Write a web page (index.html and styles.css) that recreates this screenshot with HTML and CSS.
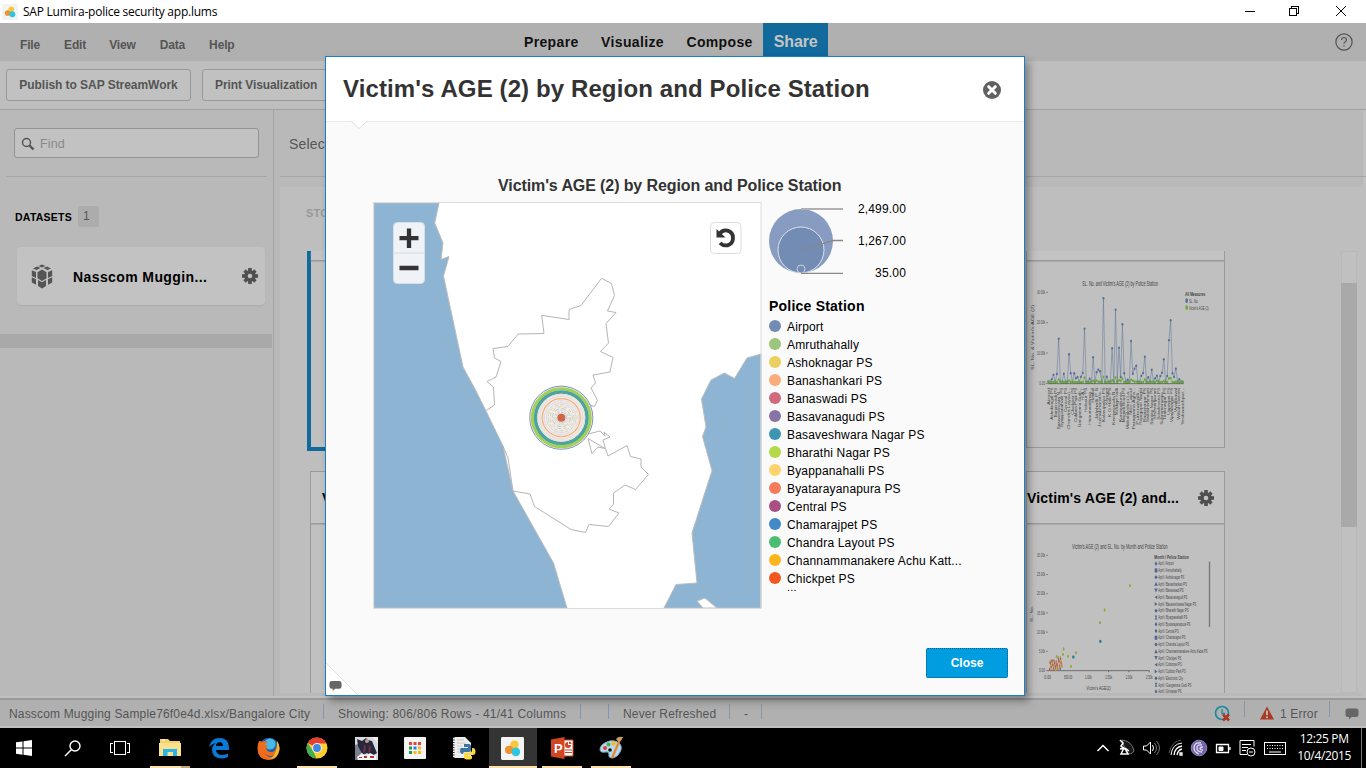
FILE: index.html
```html
<!DOCTYPE html>
<html lang="en">
<head>
<meta charset="utf-8">
<title>SAP Lumira-police security app.lums</title>
<link rel="stylesheet" href="styles.css">
</head>
<body>
<svg width="0" height="0" class="defs">
  <symbol id="gear" viewBox="0 0 16 16"><g fill="#4f4f4f"><circle cx="8" cy="8" r="5.8"/><g id="t"><rect x="6.2" y="0" width="3.6" height="16"/><rect x="0" y="6.2" width="16" height="3.6"/></g><g transform="rotate(45 8 8)"><rect x="6.3" y="0.3" width="3.4" height="15.4"/><rect x="0.3" y="6.3" width="15.4" height="3.4"/></g></g><circle cx="8" cy="8" r="2.300" fill="#c3c3c3"/></symbol>
  <symbol id="chat" viewBox="0 0 14 12"><path d="M3 .5h8q2.500 0 2.500 2.500v3.500q0 2.500-2.500 2.500H6.500L4 11.500V9H3Q.5 9 .5 6.500V3Q.5.5 3 .5z" fill="#666"/></symbol>
  <symbol id="lumira" viewBox="0 0 24 24"><rect width="24" height="24" rx="1.500" fill="#f3f3f3"/><circle cx="14" cy="8" r="4.300" fill="#f9c73a"/><circle cx="8.500" cy="13.500" r="4.300" fill="#ee9230"/><circle cx="15.500" cy="15.500" r="4.500" fill="#2fc5de"/></symbol>
</svg>
<div class="screen">
  <header class="titlebar">
    <svg class="app-icon" width="16" height="16"><use href="#lumira"/></svg>
    <span class="win-title">SAP Lumira-police security app.lums</span>
    <svg class="win-controls" width="110" height="22" fill="none" stroke="#000" shape-rendering="crispEdges"><path d="M2 10.500h10"/><path d="M46.500 7.500h7v7h-7zM48.500 7v-1.500h7v7H54"/><path d="M93 5l10 10M103 5L93 15" shape-rendering="auto"/></svg>
  </header>

  <nav class="menubar">
    <div class="menus"><span>File</span><span>Edit</span><span>View</span><span>Data</span><span>Help</span></div>
    <div class="tabs"><span>Prepare</span><span>Visualize</span><span>Compose</span><span class="active">Share</span></div>
    <svg class="help" width="18" height="18" fill="none" stroke="#555" stroke-width="1.200"><circle cx="9" cy="9" r="8.100"/><path d="M6.500 7q0-2.500 2.500-2.500T11.500 7q0 1-1.300 1.800T9 10.800M9 12.200v1.400"/></svg>
  </nav>

  <div class="toolbar"><button>Publish to SAP StreamWork</button><button class="print">Print Visualization</button></div>

  <main class="work">
    <aside class="sidebar">
      <div class="search-wrap"><div class="search">
        <svg width="14" height="14" fill="none" stroke="#555"><circle cx="5.500" cy="5.500" r="4" stroke-width="1.500"/><path d="M8.500 8.500l4 4" stroke-width="2.400"/></svg><span>Find</span>
      </div></div>
      <div class="datasets"><b>DATASETS</b><span class="count">1</span></div>
      <div class="dataset">
        <svg width="22" height="25" fill="#555"><path d="M7.500 2L11 .5 14.500 2 11 3.500zM2 4.500L6 2.500 9.500 4 5.500 6zM12.500 4L16 2.500l4 2L16.500 6zM.8 6.200L5 8v6l-4.200-2zM21.200 6.200L17 8v6l4.200-2zM.8 13.200L5 15.200v5.500L.8 18.500zM21.200 13.200L17 15.200v5.500l4.200-2.200zM11 5.500l4.500 2.800v6L11 17l-4.500-2.700v-6zM7 16l4 2.200L15 16v6l-4 2.500L7 22z"/></svg>
        <strong>Nasscom Muggin...</strong>
        <svg width="16" height="16"><use href="#gear"/></svg>
      </div>
      <div class="hscroll"></div>
    </aside>
    <section class="content">
      <div class="select-row">Select</div>
      <div class="board">
        <div class="stories">STORIES</div>
        <div class="cards">
          <article class="card selected"><div class="card-head"></div></article>
          <article class="card top right"><div class="card-head"></div>
            <svg id="line-chart" width="197" height="186" viewBox="21 63 591 558"></svg></article>
          <article class="card low"><div class="card-head"><strong>Victim's</strong></div></article>
          <article class="card low right"><div class="card-head"><strong>Victim's AGE (2) and...</strong><svg width="16" height="16"><use href="#gear"/></svg></div>
            <svg id="scatter-chart" width="197" height="169" viewBox="21 192 591 507"></svg></article>
          <div class="vscroll"><div class="thumb"></div></div>
        </div>
      </div>
    </section>
  </main>

  <footer class="status">
    <span class="s-file">Nasscom Mugging Sample76f0e4d.xlsx/Bangalore City</span>
    <span class="s-rows">Showing: 806/806 Rows - 41/41 Columns</span>
    <span class="s-gap"></span>
    <span class="s-ref">Never Refreshed</span>
    <span class="s-dash">-</span>
    <span class="s-clock"><svg width="18" height="18" fill="none"><circle cx="8" cy="8" r="6.500" stroke="#168d9e" stroke-width="1.700"/><path d="M8 4v4.500h3" stroke="#168d9e" stroke-width="1.300"/><path d="M9 9.500l6 6M15 9.500l-6 6" stroke="#a93824" stroke-width="2.600"/></svg></span>
    <span class="s-err"><svg width="14" height="14"><path d="M7 .5L14 13.500H0z" fill="#a93824"/><path d="M7 4.500v4.800M7 10.500v1.800" stroke="#ccc" stroke-width="1.600"/></svg>1 Error</span>
    <span class="s-chat"><svg width="14" height="12"><use href="#chat"/></svg></span>
  </footer>

  <div class="taskbar">
    <div class="slot n"><svg width="16" height="16" fill="#fff"><path d="M0 2.300L6.500 1.400v6.200H0zM7.500 1.200L16 0v7.600H7.500zM0 8.500h6.500v6.200L0 13.800zM7.500 8.500H16V16l-8.500-1.200z"/></svg></div>
    <div class="slot n"><svg width="17" height="17" fill="none" stroke="#fff"><circle cx="11" cy="6" r="5" stroke-width="1.400"/><path d="M7.500 9.500L1 16" stroke-width="1.500"/></svg></div>
    <div class="slot n"><svg width="20" height="15" fill="none" stroke="#fff" shape-rendering="crispEdges"><rect x="4.500" y=".5" width="11" height="13"/><path d="M3 2.500H.5v9H3M17 2.500h2.500v9H17"/></svg></div>
    <div class="slot open wide"><svg width="22" height="20"><path d="M1 1h8l2 2h10v15H1z" fill="#f5d06b"/><path d="M0 5h22v13H0z" fill="#fce18c"/><path d="M4 18v-7h14v7h-4v-4H8.500v4z" fill="#28b4e8"/><path d="M3 2h3" stroke="#fff"/></svg></div>
    <div class="slot"><svg width="22" height="22"><path d="M1 10Q3 1 11.500 1q9 0 9.500 9v3H8q.5 5 6 5 3 0 6-1.500V20q-3 1.500-7 1.500-9-.5-9-9 0-4 4-6.500Q4 6.500 1 10zM8 9h7q0-3.700-3.400-3.700T8 9z" fill="#0a78d7"/></svg></div>
    <div class="slot"><svg width="23" height="23"><circle cx="12" cy="11" r="10.300" fill="#1d5fa8"/><circle cx="13" cy="7" r="5.500" fill="#48b9e8"/><path d="M2 4q2 0 3 1 3-2 6 0-3 1-3 3l3 1-2 2q1 4 5 4 5 0 5-5 2 5-2 8-5 3-10-2 4 5 9 4 5-2 5-8 1 11-10 11Q.5 22 .5 12 .5 7 2 4z" fill="#ee6c1c"/><path d="M20 4q3 4 2.500 9Q21 22 12 22q8-3 8-18z" fill="#f8b72c"/></svg></div>
    <div class="slot open"><svg width="22" height="22"><circle cx="11" cy="11" r="10.500" fill="#fdd02f"/><path d="M11 11L1.800 6A10.500 10.500 0 0 1 20.500 6.500H11z" fill="#e53f31"/><path d="M1.800 6l5.300 8 3.500 7.500A10.500 10.500 0 0 1 1.800 6z" fill="#43ae50"/><circle cx="11" cy="11" r="5" fill="#eee"/><circle cx="11" cy="11" r="3.900" fill="#4387de"/></svg></div>
    <div class="slot"><svg width="23" height="23"><rect width="23" height="23" fill="#d8dce2"/><path d="M0 8l6-2 3 6-2 11H0z" fill="#797f8c"/><path d="M2 2l5 2 4-3 2 2 4 1 2 5 3 7-5 3-5-3-4 2-3-5-2-4z" fill="#25283c"/><path d="M9 8l2 1-1 8-2-2zM14 8l2 2-1 5-2 1z" fill="#6d2e48"/><circle cx="12" cy="4" r="2" fill="#c69b82"/><path d="M17 0h6v6z" fill="#eee"/><path d="M2 20l5-4 4 3 4-3 6 3v4H3z" fill="#f6f6f6"/><path d="M4 20h3v1H4zM9 19h3v2H9zM15 19h4v2h-4z" fill="#b33"/></svg></div>
    <div class="slot"><svg width="22" height="22"><rect width="22" height="22" rx="1" fill="#f4f4f4"/><path d="M5 5h3v3H5zM9.500 5h3v3h-3zM14 5h3v3h-3z" fill="#ea4335"/><path d="M5 9.500h3v3H5zM5 14h3v3H5z" fill="#169c53"/><path d="M9.500 9.500h3v3h-3z" fill="#1687e8"/><path d="M14 9.500h3v3h-3zM9.500 14h3v3h-3zM14 14h3v3h-3z" fill="#fcb714"/></svg></div>
    <div class="slot"><svg width="24" height="24"><path d="M1 1h12l6 6v15H1z" fill="#eee"/><path d="M1.500 1v21" stroke="#222" stroke-width="2" stroke-dasharray="1 1.500"/><path d="M5 4h7M5 7h9M5 10h5M5 13h4M5 16h4" stroke="#c8c8c8"/><path d="M12 8h5q2 0 2 2v4q0 2-2 2h-4q-2 0-2 2-3 0-3-3.500T11 12h5v-1h-4z" fill="#3c74a5"/><path d="M20 12h1q2.500 0 2.500 3.500T20.500 19H16v1h4v2q0 1.500-4 1.500t-4-2V18q0-1.500 2-1.500h4q2 0 2-2.500z" fill="#fdd843"/></svg></div>
    <div class="slot open current"><svg width="23" height="23"><use href="#lumira"/></svg></div>
    <div class="slot open"><svg width="23" height="22"><path d="M12 3h10v16H12z" fill="#fff" stroke="#d14424"/><path d="M14 13h7M14 15.500h7" stroke="#d14424"/><path d="M17 5a3 3 0 1 0 3 3h-3z" fill="#d14424"/><path d="M18 4.500q2.500 0 2.500 2.500H18z" fill="#d14424"/><path d="M0 2.500L13.500 0v22L0 19.500z" fill="#d14424"/><text x="3" y="15.500" class="ppt">P</text></svg></div>
    <div class="slot open"><svg width="25" height="24"><path d="M8 6q6-3 12 1 4 4 1 9-3 6-9 6-3-1-2-4 0-3-4-2-5 1-5-3Q2 8 8 6z" fill="#b6d9ee" stroke="#7eacc9"/><circle cx="6" cy="12" r="2" fill="#e23f3b"/><circle cx="9.500" cy="8.500" r="2" fill="#41b34c"/><circle cx="14.500" cy="7.500" r="2.200" fill="#f8b928"/><circle cx="11" cy="14" r="1.800" fill="#111"/><path d="M20 6l-7 16" stroke="#e8862c" stroke-width="2.200"/><path d="M17 3q2-3 7-2-1 3-4 6z" fill="#c99b62"/></svg></div>
    <div class="tray">
      <svg width="194" height="24" fill="none" stroke="#fff">
        <path d="M1.500 15L7 9.500l5.500 5.500" stroke-width="1.500"/>
        <g><path d="M26 4q10 1 12 11-3 5-8 1z" fill="#171717" stroke="#777"/><path d="M24 4l3 3-2 3 4 3M28 12l-3 6h7l-3-6 4 3M24 13l4-1" stroke-width="1.500"/></g>
        <path d="M47.500 10h3l4-4v12l-4-4h-3z"/><path d="M56.500 9q2 3 0 6"/><path d="M58.500 7q4 5 0 10M60.500 5q6 7 0 14" stroke="#777"/>
        <path d="M78 19q1-8 8-9M81 19q1-5 5-6M84 19v-2h2v2z" stroke-width="1.300"/><path d="M75 19q1-11 11-12" /><path d="M73 17q3-12 12-13" stroke="#555"/>
        <circle cx="103" cy="12" r="7.800" fill="#7564a8" stroke="#8d7fbc"/><path d="M105 7q-7-1-7 5 0 4 5 6M106 9q-5-1-5 3 0 4 5 4M107 11q-3 0-3 1.500t3 1.500" stroke="#e4dff2" stroke-width="1.300"/>
        <path d="M120.500 8.500h12v8h-12zM134 11v3" stroke-width="1.300"/><path d="M123 11h4v3.500h-4z" fill="#fff"/>
        <path d="M151 18.500h-7v-14h14v6M146 8.500h9M146 11.500h6M146 14.500h4"/><circle cx="155" cy="16" r="4"/><path d="M153 16h4"/>
        <rect x="168.500" y="6.500" width="21" height="12"/><path d="M171 9.500h17M171 12.500h17" stroke-dasharray="1 1.500"/><path d="M173 16h12"/>
      </svg>
      <div class="time"><span>12:25 PM</span><span>10/4/2015</span></div>
    </div>
  </div>

  <section class="modal">
    <header class="modal-head"><h1>Victim's AGE (2) by Region and Police Station</h1>
      <svg width="18" height="18"><circle cx="9" cy="9" r="9" fill="#606060"/><path d="M5.700 5.700l6.600 6.600M12.300 5.700l-6.600 6.600" stroke="#fff" stroke-width="3" stroke-linecap="round"/></svg></header>
    <svg class="notch" width="18" height="9"><path d="M1 0l8 7.500L17 0" fill="#fff" stroke="#ddd"/></svg>
    <h2>Victim's AGE (2) by Region and Police Station</h2>
    <div class="viz">
      <svg class="map" width="389" height="407" viewBox="373 202 389 407">
        <rect x="373.500" y="202.500" width="387.500" height="406" fill="#fff"/>
        <g fill="#8db4d3" stroke="#bcbcbc">
          <path d="M374 203H439L434.700 223 443 243 441 259.500 449 256.500 443.500 276 463 367 475 389 486 411 503 446 513 491 553.500 563 567 608H374z"/>
          <path d="M761 354L747 358 734.500 378.500 724.500 373 711 380 701.500 399 706 427 702.500 436.500 712 470.500 692 533 697 583 676 584.500 664 608H761z"/>
          <path d="M697 601L705 598 717 608H703z" fill="#fff"/>
        </g>
        <g fill="none" stroke="#b5b5b5">
          <path d="M503 446L508 458 513 491"/>
          <path d="M486.500 410.500L494.500 405 493.500 387 487 381.500 496 377 501 361.500 494.500 358 493 348.500 508 346.500 518 334 544 333.500 541.700 315.300 569 319.500V309.500L581 305.500 601.500 278.300 611.500 283.500 614.500 295.500 607.500 311 616 312.500 606 323.500 608.500 343 600.500 351.500 613 357.500 610 372 593 375 595.500 383 591 388 597.500 400.500 594.500 406.500 590 405"/>
          <path d="M588 434L600 431 605 436 604 432 610 437 603 440 605.500 449 608 456 627 445.500 630.500 456.500 641 459V467L648.500 474.500 635.500 489.500 625 485 613.500 493V504L609 509 619 513 608.500 526.500 589 524.500 585.500 532.500 571 529.500 534.500 506.500 530 494 513 491"/>
          <path d="M588 438.500L605 448.500 598 447 592 453.500z"/>
        </g>
        <g fill="none" transform="translate(561.300 417.700)">
          <circle r="31.600" fill="#f4f4f8" stroke="#8091ba"/><circle r="29" stroke="#a2cf55" stroke-width="3"/><circle r="25.800" stroke="#4ea39a" stroke-width="3.500"/>
          <circle r="23.500" fill="#f3ece9" stroke="#d8e0df"/><circle r="21.500" stroke="#ead7d7"/><circle r="19" stroke="#f1b070" stroke-width="1.200"/>
          <circle r="17" stroke="#e9d9de"/><circle r="15" stroke="#dcdae2"/><circle r="13" stroke="#c8dfbc" stroke-dasharray="4 2"/><circle r="11" stroke="#e9c5b0" stroke-dasharray="3 3"/><circle r="9" stroke="#b5d3b5" stroke-dasharray="5 2"/><circle r="7" stroke="#e3c9ab" stroke-dasharray="2 2"/><circle r="5.300" stroke="#b2c2cf" stroke-dasharray="2 1"/>
          <path d="M0-23V23M-23 0H23M-16-16L16 16M-16 16L16-16M-9-21L9 21M9-21L-9 21M-21-9L21 9M-21 9L21-9" stroke="#dcdcdc" stroke-width=".6"/><circle r="4" fill="#cf6747"/>
        </g>
        <rect x="373.500" y="202.500" width="387.500" height="406" fill="none" stroke="#dcdcdc"/>
        <rect x="393.500" y="222.500" width="31" height="61" rx="4" fill="#eff3f8" stroke="#d8dfe6"/><path d="M394 253h30" stroke="#d8d8d8"/>
        <path d="M399.500 238.200h19M409 228.500v19.500M399.500 268h19" stroke="#333" stroke-width="4.300"/>
        <rect x="710.500" y="222.500" width="30.500" height="31" rx="4" fill="#fff" stroke="#ddd"/>
        <path d="M719.500 234q3-4.500 8-3.300 5.500 1.500 5.500 7.300t-5.500 7.300q-4.500.8-7.500-2.300" fill="none" stroke="#333" stroke-width="3.800"/><path d="M716.500 229v8.500h9z" fill="#333"/>
      </svg>
      <div class="legend">
        <div class="sizes">
          <svg width="76" height="68"><circle cx="32" cy="34" r="32" fill="#879cc0"/><circle cx="32" cy="43" r="23" fill="#738cb4" stroke="#dce2ec"/><circle cx="32" cy="62" r="4" fill="#738cb4" stroke="#c5cddd"/><g fill="none" stroke="#888"><path d="M32 2h42" stroke="#b0b0b0" stroke-width="2"/><path d="M32 43.500l32-10h10" stroke-width="1.300"/><path d="M32 66.300h42" stroke-width="1.300"/></g></svg>
          <div class="size-labels"><span>2,499.00</span><span>1,267.00</span><span>35.00</span></div>
        </div>
        <h3>Police Station</h3>
        <ul id="stations"></ul>
        <div class="more">...</div>
      </div>
    </div>
    <button class="close">Close</button>
    <svg class="fold" width="34" height="34"><path d="M0 2v32h31z" fill="#fff"/><path d="M0 2l32 32" stroke="#ddd"/><use href="#chat" x="3" y="19" width="13" height="12"/></svg>
  </section>
</div>
<script src="app.js"></script>
</body>
</html>
```
FILE: styles.css
```css
* { box-sizing: border-box; }
body { margin: 0; font: 12px "Liberation Sans", Arial, sans-serif; letter-spacing: .17px; color: #000; }
.defs { position: absolute; }
svg { display: block; flex: none; }
.screen { position: relative; width: 1366px; height: 768px; overflow: hidden; display: flex; flex-direction: column; background: #bebebe; }
.titlebar { height: 23px; flex: none; background: #fff; display: flex; align-items: center; padding: 0 13px 0 2px; }
.win-title { font: 12px "Open Sans", sans-serif; letter-spacing: -.24px; margin-left: 5px; flex: 1; }
.menubar { height: 38px; flex: none; background: #b0b0b0; display: flex; align-items: flex-start; }
.menus { display: flex; gap: 24px; padding: 15px 0 0 20px; width: 507px; font-weight: bold; color: #555; letter-spacing: -.15px; line-height: 14px; }
.menus span:nth-child(3) { margin-left: -1px; }
.tabs { display: flex; font: bold 14px/38px "Liberation Sans", sans-serif; letter-spacing: .35px; color: #111; flex: 1; }
.tabs span { padding: 0 5.500px 0 17px; }
.tabs .active { background: #11699c; color: #c4c4c4; font-size: 16px; letter-spacing: -.1px; padding: 0; width: 65px; text-align: center; margin-left: 5px; }
.help { margin: 10px 13px 0 0; }
.toolbar { height: 49px; flex: none; border-bottom: 1px solid #a1a1a1; padding: 8px 6px; display: flex; gap: 11px; }
.toolbar button { width: 185px; height: 32px; border: 1px solid #999; border-radius: 3px; background: #c1c1c1; color: #555; font: bold 12px "Liberation Sans", sans-serif; letter-spacing: -.05px; padding: 0; }
.toolbar .print { width: 130px; text-align: left; padding-left: 12px; letter-spacing: -.08px; }
.work { height: 588px; flex: none; display: flex; background: #b9b9b9; padding-right: 6px; border-right: 3px solid #c0c0c0; border-bottom: 2px solid #c0c0c0; }
.sidebar { width: 274px; border-right: 1px solid #a3a3a3; flex: none; }
.search-wrap { margin: 0 6px; height: 67px; border-bottom: 1px solid #a5a5a5; padding: 18px 8px 0; }
.search { height: 30px; border: 1px solid #96938e; border-radius: 3px; background: #c2c2c2; display: flex; align-items: center; gap: 5px; padding: 1px 0 0 6px; color: #888; }
.search span { font-size: 12.500px; }
.datasets { display: flex; align-items: center; margin: 29px 0 0 15px; gap: 6px; }
.datasets b { font-size: 10.500px; letter-spacing: .25px; }
.count { width: 21px; height: 21px; border-radius: 2px; background: #acacac; color: #555; line-height: 21px; padding-left: 5px; }
.dataset { margin: 20px 8px 0 17px; height: 58px; border-radius: 4px; background: #c2c2c2; box-shadow: 0 1px 1px #adadad; display: flex; align-items: center; padding: 0 7px 0 14px; }
.dataset strong { font-size: 14px; letter-spacing: .4px; flex: 1; padding-left: 20px; padding-top: 2px; }
.hscroll { height: 14px; margin: 29px 1px 0 0; background: #a9a9a9; }
.content { flex: 1; padding-left: 6px; }
.select-row { height: 67px; border-bottom: 1px solid #a5a5a5; font-size: 14px; color: #555; padding: 26px 0 0 9px; }
.board { margin-top: 10px; height: 506px; background: #bebebe; overflow: hidden; }
.stories { height: 64px; padding: 20px 0 0 26px; font-weight: bold; font-size: 11px; color: #999; }
.cards { display: grid; grid-template-columns: 719px 226px 131px; grid-template-rows: 200px 242px; row-gap: 20px; padding-left: 27px; }
.card { background: #c0c0c0; border: 1px solid #999; }
.card-head { height: 10px; border-bottom: 1px solid #999; background: #c3c3c3; box-shadow: 0 1px 1px #adadad; }
.selected { grid-row: 1; grid-column: 1; width: 240px; border: solid #11699c; border-width: 0 4px 4px; }
.top { border-top: 0; height: 197px; }
.right { grid-column: 2; width: 199px; }
.card:not(.right) { grid-column: 1; }
.low { grid-row: 2; }
.low:not(.right) { width: 236px; margin-left: 3px; }
.low .card-head { height: 52px; display: flex; align-items: center; justify-content: space-between; padding: 0 10px 0 11px; }
.low.right .card-head { padding-left: 0; }
.low strong { font-size: 14px; letter-spacing: .18px; white-space: nowrap; padding-top: 1px; }
.vscroll { grid-column: 3; grid-row: 1 / 3; margin-left: 89px; width: 16px; height: 442px; background: #c0c0c0; border: 1px solid #b8b8b8; }
.thumb { margin: 31px -1px 0; height: 244px; background: #a9a9a9; }
.status { height: 30px; flex: none; background: #b0b0b0; border-top: 2px solid #999; border-bottom: 2px solid #c0c0c0; display: flex; align-items: flex-start; padding-top: 3px; color: #555; white-space: nowrap; }
.status span { height: 15px; line-height: 21px; border-right: 1px solid #8297b0; }
.s-file { width: 324px; padding-left: 9px; }
.s-rows { width: 257px; padding-left: 14px; letter-spacing: .2px; }
.s-gap { width: 28px; }
.s-ref { width: 121px; padding-left: 14px; }
.s-dash { width: 32px; padding-left: 14px; }
.status .s-clock { width: 483px; padding-left: 452px; }
.status .s-err { width: 85px; padding-left: 15px; display: flex; gap: 6px; }
.status .s-chat { border: 0; padding: 4px 0 0 15px; }
.status > span { margin-top: 1px; }
.status .s-clock, .status .s-err { margin-top: -2px; line-height: 26px; height: 16px; }
.status .s-clock svg { margin-top: 4px; }
.status .s-err svg { margin-top: 5px; }
.taskbar { height: 40px; flex: none; background: #000; display: flex; padding-right: 4px; }
.slot { width: 49px; height: 40px; display: flex; align-items: center; justify-content: center; position: relative; }
.slot.n { width: 48px; }
.slot.n:nth-child(3) { margin-right: 1.500px; }
.open::after { content: ""; position: absolute; left: 4px; bottom: 0; width: 40px; height: 2px; background: #fae0a8; }
.wide::after { background: linear-gradient(90deg, #fae0a8 78%, #bea87b 78%); }
.current { background: #343434; width: 48px; margin-right: 1px; }
.current::after { left: 0; width: 48px; }
.tray { margin-left: auto; display: flex; align-items: center; border-right: 1px solid #777; padding-right: 10px; width: 266px; justify-content: space-between; }
.time { color: #fff; font: 12px/17px "Open Sans", sans-serif; letter-spacing: -.35px; display: flex; flex-direction: column; align-items: center; margin-top: -2px; }
.ppt { font: bold 13px "Liberation Sans", sans-serif; fill: #fff; }
.modal { position: absolute; left: 325px; top: 56px; width: 700px; height: 640px; border: 1px solid #1480cc; background: #fafafa; box-shadow: 4px 5px 8px rgba(0,0,0,.35); }
.modal-head { height: 65px; background: #fff; border-bottom: 1px solid #ebebeb; display: flex; align-items: center; justify-content: space-between; padding: 1px 23px 0 17px; }
h1 { margin: 0; font-size: 24px; letter-spacing: .11px; color: #333; padding-bottom: 2px; }
.notch { margin: -1px 0 0 24px; }
h2 { margin: 46px 0 0 172px; font-size: 16px; line-height: 20px; letter-spacing: -.1px; color: #333; }
.viz { display: flex; margin: 6px 0 0 47px; gap: 7px; }
.legend { padding-top: 5px; }
.sizes { display: flex; }
.size-labels { display: flex; flex-direction: column; text-align: right; width: 61px; line-height: 14px; gap: 18px; margin-top: -5px; }
h3 { margin: 17px 0 3px; font-size: 14px; line-height: 18px; letter-spacing: .22px; }
.legend ul { list-style: none; margin: 0; padding: 0; }
.legend li { display: flex; align-items: center; height: 18px; line-height: 18px; gap: 6px; }
.dot { width: 12px; height: 12px; border-radius: 50%; margin-top: -2px; }
.more { margin: -4px 0 0 18px; line-height: 7px; font-size: 11px; }
.close { position: absolute; right: 16px; bottom: 17px; width: 82px; height: 30px; background: #009de0; border: 1px dotted #0a5c86; border-radius: 2px; color: #fff; font: bold 12px "Liberation Sans", sans-serif; }
.fold { position: absolute; left: 0; bottom: 0; }
.chart-text { font-family: "Liberation Sans", sans-serif; fill: #404040; letter-spacing: 0; }
```
FILE: app.js
```js
const NS = 'http://www.w3.org/2000/svg';
function add(svg, tag, attrs, text) {
  const e = document.createElementNS(NS, tag);
  for (const k in attrs) e.setAttribute(k, attrs[k]);
  if (text) { e.textContent = text; e.setAttribute('class', 'chart-text'); }
  svg.appendChild(e);
}
function label(svg, x, y, text, width, size, extra) {
  add(svg, 'text', Object.assign({ x, y, 'font-size': size, textLength: width, lengthAdjust: 'spacingAndGlyphs' }, extra), text);
}

// Station legend
const stations = [['Airport', '#738cb6'], ['Amruthahally', '#9bc67b'], ['Ashoknagar PS', '#ebcf60'], ['Banashankari PS', '#f9ad7a'], ['Banaswadi PS', '#d1687c'], ['Basavanagudi PS', '#8873a5'], ['Basaveshwara Nagar PS', '#3b95b3'], ['Bharathi Nagar PS', '#b4d947'], ['Byappanahalli PS', '#fcd36c'], ['Byatarayanapura PS', '#f47c5c'], ['Central PS', '#a94f83'], ['Chamarajpet PS', '#4189c7'], ['Chandra Layout PS', '#4bbd73'], ['Channammanakere Achu Katt...', '#fdb51d'], ['Chickpet PS', '#f2571f']];
document.getElementById('stations').innerHTML = stations.map(s => `<li><span class="dot" style="background:${s[1]}"></span>${s[0]}</li>`).join('');

// Line chart
const lc = document.getElementById('line-chart');
label(lc, 187, 137, "SL. No. and Victim's AGE (2) by Police Station", 227, 19);
[['30.00k', 157], ['20.00k', 248], ['10.00k', 339], ['0.00', 430]].forEach(t => {
  label(lc, t[0] === '0.00' ? 58 : 51, t[1] + 5, t[0], t[0] === '0.00' ? 17 : 24, 15);
  add(lc, 'path', { d: `M78 ${t[1]}h6`, stroke: '#666', 'stroke-width': 2 });
});
label(lc, 41, 390, "SL. No. & Victim's AGE (2)", 195, 13, { transform: 'rotate(-90 41 390)' });
const peaks = { 2: 418, 3: 404, 5: 402, 6: 296, 9: 401, 12: 343, 13: 400, 15: 400, 16: 415, 17: 411, 19: 410, 20: 399, 21: 266, 24: 416, 26: 352, 28: 397, 29: 389, 30: 394, 32: 175, 34: 410, 37: 325, 39: 209, 41: 323, 42: 411, 43: 253, 44: 400, 46: 419, 48: 303, 49: 401, 50: 386, 51: 377, 54: 407, 55: 399, 56: 350, 58: 412, 60: 389, 62: 415, 63: 407, 65: 408, 66: 398, 67: 358, 69: 408, 70: 301, 71: 241, 72: 400, 73: 411, 74: 386, 76: 418 };
const blue = [], green = [];
for (let i = 0; i < 79; i++) {
  const x = 85 + i * 5.17, y = peaks[i] || 425;
  blue.push([x, y]); green.push([x, 428 - (430 - y) * 0.07 - (i % 7 === 0 ? 4 : 0)]);
}
[[blue, '#566f98', 3], [green, '#66aa38', 3]].forEach(([pts, color, r]) => {
  add(lc, 'polyline', { points: pts.join(' '), fill: 'none', stroke: color, 'stroke-width': 1.8, 'stroke-opacity': .8 });
  pts.forEach(p => add(lc, 'ellipse', { cx: p[0], cy: p[1], rx: r, ry: 3.8, fill: color }));
});
add(lc, 'path', { d: 'M83 431H491', stroke: '#444', 'stroke-width': 2 });
'Airport|Ashoknagar PS|Banaswadi PS|Basaveshwara N...|Byappanahalli PS|Central PS|Chandra Layout...|Chickpet PS|Cubbon Park PS|Gangamma Gudi...|H.A.L|Halasur PS|Hanumanthnag...|Hebbal|Jalahalli P S|Jnanabharathi...|Kalasipalya PS|Kengeri|K G Halli PS|Kempegowda N...|Kodigehalli|Konanakunte...|Magadi Road PS|Mahalakshmi La...|Mico Layout|Parappana Agra...|Puttenahalli...|Rajagopal Nagar|Rajajinagar PS|Sadashivanagar|Sanjay Nagar PS|Seshadripuram|Soladevana PS|Subramanyapu...|Tilaknagar PS|Upparpet PS|Vijayanagar PS|Vyalikaval|Wilson Garden|Yeshwanthpur...'.split('|').forEach((s, i) => {
  const x = 89 + i * 10.3, len = s.length * 7.4;
  label(lc, x, 443 + len, s, len, 10, { transform: `rotate(-90 ${x} ${443 + len})` });
});
label(lc, 495, 167, 'All Measures', 61, 14, { 'font-weight': 'bold' });
add(lc, 'ellipse', { cx: 500, cy: 182, rx: 4, ry: 7, fill: '#566f98' });
add(lc, 'ellipse', { cx: 500, cy: 203, rx: 4, ry: 7, fill: '#66aa38' });
label(lc, 507, 188, 'SL. No.', 28, 15);
label(lc, 507, 209, "Victim's AGE (2)", 59, 15);

// Scatter chart
const sc = document.getElementById('scatter-chart');
label(sc, 156, 266, "Victim's AGE (2) and SL. No. by Month and Police Station", 287, 19);
['30.00k', '25.00k', '20.00k', '15.00k', '10.00k', '5.00k', '0.00'].forEach((t, i) => {
  const y = 286 + i * 57.6;
  label(sc, i > 4 ? 57 : 51, y + 5, t, i > 4 ? 18 : 24, 15);
  add(sc, 'path', { d: `M78 ${y}h6`, stroke: '#666', 'stroke-width': 2 });
});
label(sc, 40, 486, 'SL. No.', 48, 12, { transform: 'rotate(-90 40 486)' });
add(sc, 'path', { d: 'M83 632H388M266 632v5M327 632v5M388 632v5', stroke: '#444', 'stroke-width': 2, fill: 'none' });
['0.00', '500.00', '1.00k', '1.50k', '2.00k', '2.50k'].forEach((t, i) => label(sc, 73 + i * 61 - (i === 1 ? 2 : 0), 656, t, i === 1 ? 25 : 20, 15));
label(sc, 199, 691, "Victim's AGE(2)", 73, 15);
label(sc, 403, 296, 'Month / Police Station', 103, 14, { 'font-weight': 'bold' });
const ramp = ['#d34f32', '#93a83a', '#d7863d', '#b2466c', '#3f7fae', '#c9a935', '#d34f32'];
for (let i = 0; i < 64; i++) {
  const dx = (i * 17) % 38;
  add(sc, 'rect', { x: 87 + dx, y: 626 - ((i * 13) % 41) * (dx > 25 ? .95 : .7), width: 3.5, height: 6, fill: ramp[i % 7] });
}
[[330, 377, 0], [254, 450, 0], [240, 488, 0], [241, 544, 1], [131, 567, 0], [129, 583, 0], [144, 589, 0], [160, 591, 1], [168, 578, 0], [153, 619, 0], [110, 590, 0]].forEach(p => {
  add(sc, 'ellipse', { cx: p[0], cy: p[1], rx: p[2] ? 4 : 3, ry: 5, fill: p[2] ? '#2b829f' : '#93a83a' });
});
[['Airport', 46], ['Amruthahally', 70], ['Ashoknagar PS', 78], ['Banashankari PS', 86], ['Banaswadi PS', 76], ['Basavanagudi PS', 87], ['Basaveshwara Nagar PS', 114], ['Bharathi Nagar PS', 91], ['Byappanahalli PS', 87], ['Byatarayanapura PS', 96], ['Central PS', 61], ['Chamarajpet PS', 82], ['Chandra Layout PS', 92], ['Channammanakere Achu Katta PS', 148], ['Chickpet PS', 69], ['Cottonpet PS', 70], ['Cubbon Park PS', 82], ['Electronic City', 74], ['Gangamma Gudi PS', 99], ['Girinagar PS', 70]].forEach((s, i) => {
  const y = 311 + i * 20.2;
  const shapes = ['M404 ' + y + 'l4-7 4 7-4 7z', `M404 ${y - 6}h8v12h-8z`, `M403 ${y}l5-6 5 6-5 6z`, `M403 ${y + 6}l5-12 5 12z`, `M403 ${y - 6}l5 12 5-12z`, `M412 ${y - 6}l-8 6 8 6z`, `M404 ${y - 6}l8 6-8 6z`, `M403 ${y}l5-6 5 6-5 6z`, `M404 ${y - 6}h8l-3 6 3 6h-8l3-6z`, `M404 ${y}l4-7 4 7-4 7z`];
  add(sc, 'path', { d: shapes[i % 10], fill: '#4b6590' });
  label(sc, 415, y + 5, 'April / ' + s[0], s[1], 15);
});
add(sc, 'path', { d: 'M568.5 305V501', stroke: '#777', 'stroke-width': 4 });
```
